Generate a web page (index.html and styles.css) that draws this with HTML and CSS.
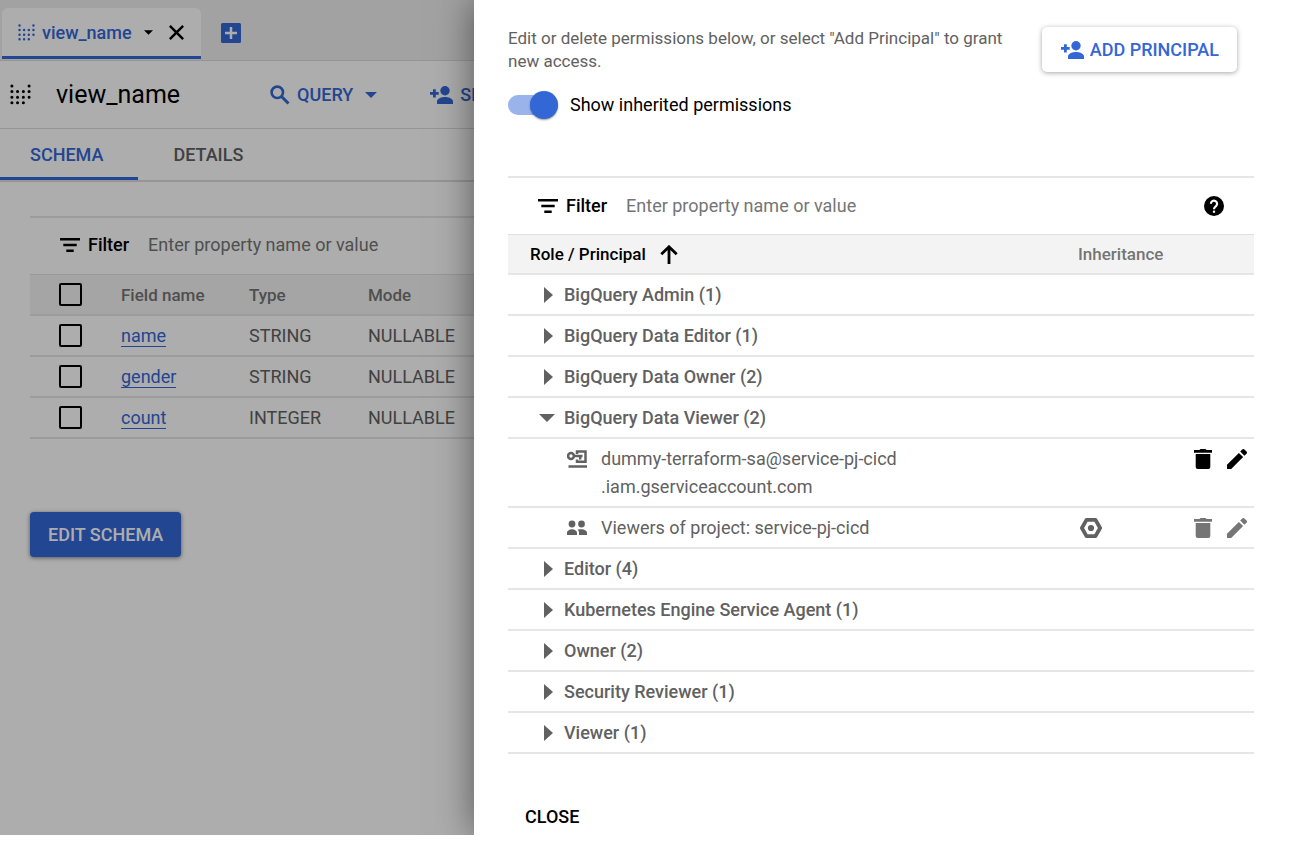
FILE: index.html
```
<!DOCTYPE html>
<html lang="en">
<head>
<meta charset="utf-8">
<title>view_name permissions</title>
<link rel="stylesheet" href="styles.css">
</head>
<body>
<svg class="defs" aria-hidden="true">
  <symbol id="i-view" viewBox="0 0 22 22"><path stroke="currentColor" stroke-width="3.200" stroke-linecap="round" stroke-dasharray="0 5.9" fill="none" d="M2 2v18M20 2v13M7.9 7.9v12.2M14 7.9v12.2"/></symbol>
  <symbol id="i-filter" viewBox="0 0 20 14"><path stroke="currentColor" stroke-width="2.4" d="M0 1.2h20M3.3 7h13.4M6.3 12.8h7.4"/></symbol>
  <symbol id="i-down" viewBox="0 0 10 5"><path fill="currentColor" d="M0 0h10L5 5z"/></symbol>
  <symbol id="i-addperson" viewBox="0 0 23 18"><g fill="currentColor"><circle cx="15" cy="4.7" r="4.7"/><path d="M7 18v-2.6c0-3 5-4.400 8-4.400s8 1.400 8 4.400V18zM3 3.200h2.800v2.800h2.900v2.800H5.800v2.800H3V8.800H0V6h3z"/></g></symbol>
  <symbol id="i-right" viewBox="0 0 9 16"><path fill="currentColor" d="M0 0l9 8-9 8z"/></symbol>
  <symbol id="i-trash" viewBox="0 0 18 20"><path fill="currentColor" d="M5.500 1L6.500 0h5l1 1H18v2.700H0V1zM1.700 5h14.600v13a2 2 0 0 1-2 2H3.700a2 2 0 0 1-2-2z"/></symbol>
  <symbol id="i-pencil" viewBox="0 0 20 20"><path fill="currentColor" d="M0 15.800L11.900 3.900l4.200 4.200L4.200 20H0zM13.200 2.600L15.300.5a1.500 1.500 0 0 1 2.100 0l2.100 2.100a1.500 1.500 0 0 1 0 2.100l-2.100 2.100z"/></symbol>
</svg>
<div class="shell">
  <div class="console">
    <div class="tabstrip">
      <div class="filetab">
        <svg class="icon-view-sm"><use href="#i-view"/></svg>
        <span>view_name</span>
        <button class="plain tab-menu" aria-label="Tab menu"><svg class="icon-down-sm"><use href="#i-down"/></svg></button>
        <button class="plain tab-close" aria-label="Close tab"><svg class="icon-x" viewBox="0 0 14 14"><path stroke="currentColor" stroke-width="2.300" d="M.8.800l12.400 12.400M13.200.800L.8 13.200"/></svg></button>
      </div>
      <button class="plain tab-add" aria-label="New tab"><svg class="icon-plus" viewBox="0 0 20 20"><rect width="20" height="20" rx="1.500" fill="currentColor"/><path stroke="#fff" stroke-width="2.500" d="M10 4v12M4 10h12"/></svg></button>
    </div>
    <header class="titlebar">
      <svg class="icon-view"><use href="#i-view"/></svg>
      <h1>view_name</h1>
      <button class="plain action query"><svg class="icon-search" viewBox="0 0 20 20"><circle cx="7.300" cy="7.300" r="5.700" fill="none" stroke="currentColor" stroke-width="2.600"/><path stroke="currentColor" stroke-width="3" d="M11.500 11.500l7 7"/></svg>QUERY<svg class="icon-down"><use href="#i-down"/></svg></button>
      <button class="plain action"><svg class="icon-person"><use href="#i-addperson"/></svg>SHARE</button>
    </header>
    <nav class="sections">
      <a class="section current" href="#schema">SCHEMA</a>
      <a class="section" href="#details">DETAILS</a>
    </nav>
    <main class="schema" id="schema">
      <div class="filterbar">
        <svg class="icon-filter"><use href="#i-filter"/></svg>
        <label for="field-filter">Filter</label>
        <input id="field-filter" type="text" placeholder="Enter property name or value">
      </div>
      <table class="fields">
        <colgroup><col class="c-check"><col class="c-name"><col class="c-type"><col></colgroup>
        <thead><tr><th><input type="checkbox" aria-label="Select all"></th><th>Field name</th><th>Type</th><th>Mode</th></tr></thead>
        <tbody>
          <tr><td><input type="checkbox" aria-label="Select name"></td><td><a href="#name">name</a></td><td>STRING</td><td>NULLABLE</td></tr>
          <tr><td><input type="checkbox" aria-label="Select gender"></td><td><a href="#gender">gender</a></td><td>STRING</td><td>NULLABLE</td></tr>
          <tr><td><input type="checkbox" aria-label="Select count"></td><td><a href="#count">count</a></td><td>INTEGER</td><td>NULLABLE</td></tr>
        </tbody>
      </table>
      <button class="edit">EDIT SCHEMA</button>
    </main>
    <div class="scrim"></div>
  </div>
  <aside class="drawer" aria-label="Permissions">
    <div class="intro">
      <div>
        <p>Edit or delete permissions below, or select "Add Principal" to grant new access.</p>
        <label class="switch"><input type="checkbox" role="switch" checked>Show inherited permissions</label>
      </div>
      <button class="add"><svg class="icon-person"><use href="#i-addperson"/></svg>ADD PRINCIPAL</button>
    </div>
    <div class="filterbar">
      <svg class="icon-filter"><use href="#i-filter"/></svg>
      <label for="role-filter">Filter</label>
      <input id="role-filter" type="text" placeholder="Enter property name or value">
      <button class="plain" aria-label="Help"><svg class="icon-help" viewBox="0 0 20 20"><circle cx="10" cy="10" r="10" fill="currentColor"/><path fill="none" stroke="#fff" stroke-width="2.200" d="M6.900 7.800a3.100 3.100 0 1 1 5.100 2.300C10.700 11.200 10 11.500 10 13.200"/><path stroke="#fff" stroke-width="2.200" d="M10 14.600v2.200"/></svg></button>
    </div>
    <table class="roles">
      <colgroup><col><col class="c-inherit"><col class="c-actions"></colgroup>
      <thead><tr>
        <th class="sorted"><button class="plain sort">Role / Principal<svg class="icon-sort" viewBox="0 0 18 19"><path fill="none" stroke="currentColor" stroke-width="2.800" d="M9 19V2M1.300 9.300L9 1.800l7.700 7.500"/></svg></button></th>
        <th>Inheritance</th><th></th>
      </tr></thead>
      <tbody>
        <tr><td colspan="3"><button class="plain role"><svg class="icon-right"><use href="#i-right"/></svg>BigQuery Admin (1)</button></td></tr>
        <tr><td colspan="3"><button class="plain role"><svg class="icon-right"><use href="#i-right"/></svg>BigQuery Data Editor (1)</button></td></tr>
        <tr><td colspan="3"><button class="plain role"><svg class="icon-right"><use href="#i-right"/></svg>BigQuery Data Owner (2)</button></td></tr>
        <tr><td colspan="3"><button class="plain role" aria-expanded="true"><svg class="icon-open"><use href="#i-down"/></svg>BigQuery Data Viewer (2)</button></td></tr>
        <tr class="tall">
          <td><div class="member"><svg class="icon-member" viewBox="0 0 20 18"><g fill="none" stroke="currentColor" stroke-width="2.500"><circle cx="4" cy="6" r="2.900"/><path d="M7 6h8.500M13.200 6v3.400M10 4V1.600h8.500v10.200H10V9.400M1.500 16.400H20"/></g></svg><span>dummy-terraform-sa@service-pj-cicd<br>.iam.gserviceaccount.com</span></div></td>
          <td></td>
          <td><div class="tools"><button class="plain" aria-label="Delete"><svg class="icon-trash"><use href="#i-trash"/></svg></button><button class="plain" aria-label="Edit"><svg class="icon-pencil"><use href="#i-pencil"/></svg></button></div></td>
        </tr>
        <tr>
          <td><div class="member"><svg class="icon-member" viewBox="0 0 20 18"><g fill="currentColor"><circle cx="5" cy="5" r="3.400"/><circle cx="14.500" cy="5" r="3.400"/><path d="M0 16v-2.200C0 11.500 3 10.300 5 10.300s5 1.200 5 3.500V16zM12 16v-2.300c0-1.300-.6-2.300-1.500-3 1.300-.400 2.700-.500 4-.500 2.300 0 5.500 1.200 5.500 3.600V16z"/></g></svg><span>Viewers of project: service-pj-cicd</span></div></td>
          <td><svg class="icon-hex" viewBox="0 0 22 20"><path fill="none" stroke="currentColor" stroke-width="3.800" stroke-linejoin="round" d="M6.500 1.900h9L20.100 10l-4.600 8.100h-9L1.900 10z"/><circle cx="11" cy="10" r="3.100" fill="currentColor"/></svg></td>
          <td><div class="tools muted"><button class="plain" aria-label="Delete" disabled><svg class="icon-trash"><use href="#i-trash"/></svg></button><button class="plain" aria-label="Edit" disabled><svg class="icon-pencil"><use href="#i-pencil"/></svg></button></div></td>
        </tr>
        <tr><td colspan="3"><button class="plain role"><svg class="icon-right"><use href="#i-right"/></svg>Editor (4)</button></td></tr>
        <tr><td colspan="3"><button class="plain role"><svg class="icon-right"><use href="#i-right"/></svg>Kubernetes Engine Service Agent (1)</button></td></tr>
        <tr><td colspan="3"><button class="plain role"><svg class="icon-right"><use href="#i-right"/></svg>Owner (2)</button></td></tr>
        <tr><td colspan="3"><button class="plain role"><svg class="icon-right"><use href="#i-right"/></svg>Security Reviewer (1)</button></td></tr>
        <tr><td colspan="3"><button class="plain role"><svg class="icon-right"><use href="#i-right"/></svg>Viewer (1)</button></td></tr>
      </tbody>
    </table>
    <button class="plain close">CLOSE</button>
  </aside>
</div>
</body>
</html>
```
FILE: styles.css
```
* { box-sizing: border-box; }
body {
  margin: 0;
  background: #fff;
  color: #000;
  font: 18px/24px Roboto, "Liberation Sans", sans-serif;
}
svg { display: block; flex: none; }
button, input { font: inherit; color: inherit; }
.defs { position: absolute; width: 0; height: 0; }
.plain { border: 0; padding: 0; background: none; display: flex; align-items: center; }

.shell {
  display: grid;
  grid-template-columns: 474fr 826fr;
  min-height: calc(100vh - 6px);
  overflow: hidden;
}
.console { position: relative; min-width: 0; overflow: hidden; }
.scrim { position: absolute; inset: 0; background: rgba(0, 0, 0, .32); }

.tabstrip {
  display: flex;
  align-items: flex-end;
  height: 61px;
  padding: 0 2px 1px;
  background: #efefef;
  border-bottom: 1px solid #dcdcdc;
}
.filetab {
  display: flex;
  align-items: center;
  height: 51px;
  padding: 1px 17px 0 16px;
  background: #fff;
  border-bottom: 3px solid #3367d6;
  border-radius: 6px 6px 0 0;
  color: #3367d6;
  font-weight: 500;
}
.filetab span { margin-left: 7px; }
.tab-menu { margin-left: 12px; color: #000; }
.tab-close { margin-left: 16px; color: #000; }
.tab-add { margin: 0 0 16px 20px; color: #3367d6; }

.titlebar {
  display: flex;
  align-items: center;
  height: 68px;
  padding-left: 10px;
  border-bottom: 1px solid #dcdcdc;
}
h1 { margin: 0 0 0 25px; font-size: 25px; line-height: 32px; font-weight: 400; }
.action { color: #3367d6; font-weight: 500; white-space: nowrap; gap: 7px; }
.query { margin: 0 53px 0 90px; }
.query .icon-down { margin-left: 5px; }

.sections { display: flex; height: 53px; border-bottom: 2px solid #dcdcdc; }
.section {
  padding: 14px 35px 0;
  border-bottom: 3px solid transparent;
  color: #616161;
  font-weight: 500;
  text-decoration: none;
}
.section.current { padding-left: 30px; color: #3367d6; border-color: #3367d6; }

.schema { width: 800px; padding: 34px 0 0 30px; }
.filterbar {
  display: flex;
  align-items: center;
  height: 58px;
  padding: 0 30px;
  border-top: 2px solid #e6e6e6;
}
.schema .filterbar { padding-bottom: 2px; }
.filterbar label { margin: 0 19px 0 8px; font-weight: 500; }
.filterbar input { flex: 1; min-width: 0; border: 0; padding: 0; background: none; outline: 0; }
.filterbar input::placeholder { color: #757575; opacity: 1; }

table { width: 100%; border-collapse: separate; border-spacing: 0; table-layout: fixed; }
th { text-align: left; font-size: 17px; font-weight: 500; color: #757575; background: #f3f3f3; }
th, td { height: 41px; padding: 0; border-bottom: 2px solid #e6e6e6; }
th { height: 42px; border-top: 1px solid #e0e0e0; }
td { color: #616161; }

.c-check { width: 91px; }
.c-name { width: 128px; }
.c-type { width: 119px; }
.fields a { color: #3367d6; text-decoration: none; border-bottom: 1px solid; }
.fields input {
  display: block;
  appearance: none;
  width: 23px;
  height: 23px;
  margin: 0 0 0 29px;
  border: 2px solid #000;
  border-radius: 2px;
}
.edit {
  display: block;
  height: 45px;
  margin-top: 73px;
  padding: 0 18px;
  border: 0;
  border-radius: 4px;
  background: #3367d6;
  color: #fff;
  font-weight: 500;
  box-shadow: 0 1px 4px rgba(0, 0, 0, .5);
}

.drawer {
  position: relative;
  min-width: 0;
  padding: 27px 46px 0 34px;
  background: #fff;
  box-shadow: 0 0 36px rgba(0, 0, 0, .5);
}
.intro { display: flex; align-items: flex-start; justify-content: space-between; gap: 34px; min-height: 149px; padding-right: 17px; }
.intro p { margin: 0; font-size: 17px; line-height: 23px; color: #616161; }
.switch { display: flex; align-items: center; gap: 12px; margin-top: 20px; }
.switch input {
  appearance: none;
  display: flex;
  justify-content: flex-end;
  align-items: center;
  width: 50px;
  height: 20px;
  margin: 0;
  border-radius: 10px;
  background: #99b3eb;
}
.switch input::before {
  content: "";
  width: 28px;
  height: 28px;
  flex: none;
  border-radius: 50%;
  background: #3367d6;
  box-shadow: 0 1px 2px rgba(0, 0, 0, .4);
}
.add {
  display: flex;
  align-items: center;
  gap: 6px;
  height: 45px;
  padding: 0 18px 0 19px;
  border: 0;
  border-radius: 5px;
  background: #fff;
  color: #3367d6;
  font-weight: 500;
  white-space: nowrap;
  box-shadow: 0 1px 5px rgba(0, 0, 0, .35);
}

.drawer .intro { min-height: 149px; }
.roles th { height: 41px; }
.c-inherit { width: 112px; }
.c-actions { width: 64px; }
.sorted { color: #000; }
.sort { padding-left: 22px; gap: 14px; font-weight: 500; }
.role { padding-left: 36px; font-weight: 500; }
.role .icon-right { margin-right: 11px; }
.role .icon-open { margin: 0 9px 0 -5px; }
.tall td { height: 69px; vertical-align: top; padding-top: 6px; }
.member { display: flex; align-items: flex-start; gap: 14px; padding-left: 59px; line-height: 28px; }
.member svg { margin-top: 5px; }
.tools { display: flex; align-items: center; justify-content: space-between; height: 28px; padding: 0 7px 0 4px; color: #000; }
.muted { color: #757575; }
.close { margin: 51px 0 0 17px; font-weight: 500; }

.icon-view-sm { width: 17px; height: 17px; }
.icon-view { width: 21px; height: 21px; }
.icon-down-sm { width: 9px; height: 5px; }
.icon-down { width: 12px; height: 6px; }
.icon-open { width: 16px; height: 8px; }
.icon-x { width: 15px; height: 15px; }
.icon-plus { width: 20px; height: 20px; }
.icon-search { width: 20px; height: 20px; }
.icon-person { width: 23px; height: 18px; }
.icon-filter { width: 20px; height: 14px; }
.icon-help { width: 20px; height: 20px; }
.icon-sort { width: 18px; height: 19px; }
.icon-right { width: 9px; height: 16px; }
.icon-member { width: 20px; height: 18px; }
.icon-hex { width: 22px; height: 20px; margin-left: 2px; }
.icon-trash { width: 18px; height: 20px; }
.icon-pencil { width: 20px; height: 20px; }
```
